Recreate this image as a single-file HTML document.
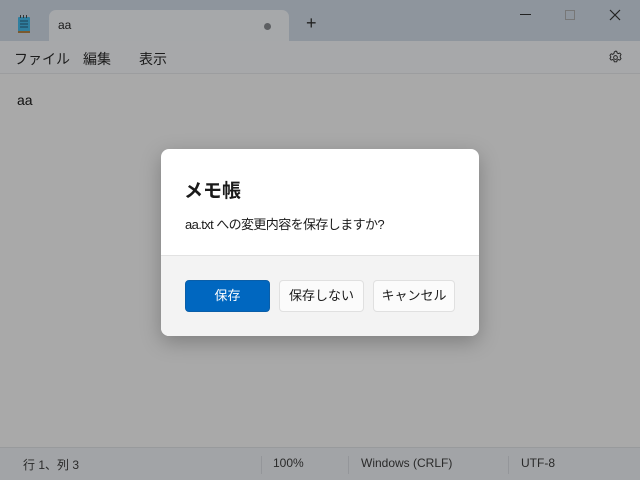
<!DOCTYPE html>
<html><head><meta charset="utf-8"><style>
*{margin:0;padding:0;box-sizing:border-box}
body{width:640px;height:480px;overflow:hidden;background:#a9a9a9;font-family:"Liberation Sans","Noto Sans CJK JP",sans-serif;position:relative;color:#1a1a1a}
.abs{position:absolute}
.title{left:0;top:0;width:640px;height:41px;background:#8e959d}
.tab{left:49px;top:10px;width:240px;height:31px;background:#a6a8aa;border-radius:7px 7px 0 0}
.menu{left:0;top:41px;width:640px;height:33px;background:#a7a8aa;border-bottom:1px solid #9c9d9f}
.menu span{position:absolute;top:8px;font-size:14px;color:#1c1c1c}
.status{left:0;top:447px;width:640px;height:33px;background:#a2a4a7;border-top:1px solid #989a9c;font-size:12px;color:#2a2a2a}
.status span{position:absolute;top:8px}
.sep{position:absolute;top:8px;width:1px;height:18px;background:#94969a}
.dlg{left:161px;top:149px;width:318px;height:187px;background:#fff;border-radius:8px;overflow:hidden;box-shadow:0 6px 20px rgba(0,0,0,.25)}
.foot{position:absolute;left:0;top:106px;width:318px;height:81px;background:#f3f3f3;border-top:1px solid #e2e2e2}
.btn{position:absolute;top:24px;height:32px;border-radius:4px;font-size:13px;text-align:center;line-height:30px;border:1px solid #e0e0e0;background:#fbfbfb;color:#1a1a1a}
</style></head><body>
<div class="abs title"></div>
<svg class="abs" style="left:17px;top:15px" width="14" height="19" viewBox="0 0 14 19"><rect x="1" y="2" width="12" height="16" rx="1" fill="#2f7fa0"/><rect x="1" y="16" width="12" height="2" fill="#7a5a30"/><g stroke="#1b3f55" stroke-width="1"><line x1="3" y1="6" x2="11" y2="6"/><line x1="3" y1="9" x2="11" y2="9"/><line x1="3" y1="12" x2="11" y2="12"/></g><g fill="#333"><rect x="3" y="0" width="1" height="3"/><rect x="6" y="0" width="1" height="3"/><rect x="9" y="0" width="1" height="3"/></g></svg>
<div class="abs tab"></div>
<div class="abs" style="left:58px;top:18px;font-size:12px">aa</div>
<div class="abs" style="left:264px;top:23px;width:7px;height:7px;border-radius:50%;background:#5d5f62"></div>
<div class="abs" style="left:306px;top:13px;font-size:18px;font-weight:300;color:#222">+</div>
<div class="abs" style="left:520px;top:14px;width:11px;height:1px;background:#222"></div>
<div class="abs" style="left:565px;top:10px;width:10px;height:10px;border:1px solid #777"></div>
<svg class="abs" style="left:609px;top:9px" width="12" height="12"><path d="M1 1L11 11M11 1L1 11" stroke="#222" stroke-width="1.2"/></svg>
<div class="abs menu"><span style="left:14px">ファイル</span><span style="left:83px">編集</span><span style="left:139px">表示</span>
<svg style="position:absolute;left:608px;top:9px" width="15" height="15" viewBox="0 0 16 16"><path d="M8 1.2l1.3.2.4 1.7 1.3.7 1.6-.6 1.3 1.6-.9 1.5v1.4l.9 1.5-1.3 1.6-1.6-.6-1.3.7-.4 1.7-2.6 0-.4-1.7-1.3-.7-1.6.6-1.3-1.6.9-1.5V7.1l-.9-1.5 1.3-1.6 1.6.6 1.3-.7.4-1.7z" fill="none" stroke="#222" stroke-width="1"/><circle cx="8" cy="8" r="2" fill="none" stroke="#222"/></svg></div>
<div class="abs" style="left:17px;top:92px;font-size:14px;color:#111">aa</div>
<div class="abs status"><span style="left:23px">行 1、列 3</span><div class="sep" style="left:261px"></div><span style="left:273px">100%</span><div class="sep" style="left:348px"></div><span style="left:361px">Windows (CRLF)</span><div class="sep" style="left:508px"></div><span style="left:521px">UTF-8</span></div>
<div class="abs dlg">
<div class="abs" style="left:23px;top:27px;font-size:19px;font-weight:bold;color:#1a1a1a">メモ帳</div>
<div class="abs" style="left:24px;top:65px;font-size:13px;letter-spacing:-0.6px;color:#1a1a1a">aa.txt への変更内容を保存しますか?</div>
<div class="foot">
<div class="btn" style="left:24px;width:85px;background:#0067c0;border-color:#0a5ea8;color:#fff">保存</div>
<div class="btn" style="left:118px;width:85px">保存しない</div>
<div class="btn" style="left:212px;width:82px">キャンセル</div>
</div></div>
</body></html>
